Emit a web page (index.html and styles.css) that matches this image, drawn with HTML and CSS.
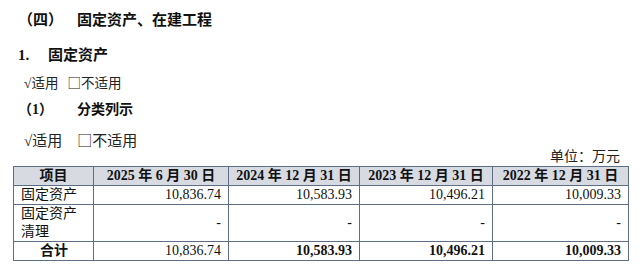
FILE: index.html
```html
<!DOCTYPE html>
<html lang="zh-CN">
<head>
    <meta charset="utf-8">
    <title>固定资产、在建工程</title>
    <link rel="stylesheet" href="styles.css">
</head>
<body>

<div class="title">
    <span class="title-no">（四）</span><span>固定资产、在建工程</span>
</div>

<div class="sub">
    <span class="sub-no">1.</span><span>固定资产</span>
</div>

<div class="check small">√适用<span class="box">□</span>不适用</div>

<div class="minor">
    <span class="minor-no">（1）</span><span>分类列示</span>
</div>

<div class="check big">√适用<span class="box">□</span>不适用</div>

<div class="sheet">
    <div class="unit">单位：万元</div>
    <table class="grid">
        <colgroup>
            <col class="c-item">
            <col class="c-d1">
            <col class="c-d2">
            <col class="c-d3">
            <col class="c-d4">
        </colgroup>
        <tr class="head">
            <th>项目</th>
            <th>2025 年 6 月 30 日</th>
            <th>2024 年 12 月 31 日</th>
            <th>2023 年 12 月 31 日</th>
            <th>2022 年 12 月 31 日</th>
        </tr>
        <tr class="row-one">
            <td class="name">固定资产</td>
            <td class="num">10,836.74</td>
            <td class="num">10,583.93</td>
            <td class="num">10,496.21</td>
            <td class="num">10,009.33</td>
        </tr>
        <tr class="row-two">
            <td class="name">固定资产清理</td>
            <td class="num">-</td>
            <td class="num">-</td>
            <td class="num">-</td>
            <td class="num">-</td>
        </tr>
        <tr class="row-total">
            <td class="name total-name">合计</td>
            <td class="num">10,836.74</td>
            <td class="num strong">10,583.93</td>
            <td class="num strong">10,496.21</td>
            <td class="num strong">10,009.33</td>
        </tr>
    </table>
</div>

</body>
</html>
```

FILE: styles.css
```css
* {
    margin: 0;
    padding: 0;
    box-sizing: border-box;
}

body {
    width: 642px;
    height: 275px;
    overflow: hidden;
    background: #ffffff;
    color: #111111;
    font-family: "Liberation Serif", "Noto Sans CJK SC", serif;
}

.title {
    margin-top: 8px;
    padding-left: 18px;
    font-size: 15px;
    line-height: 24px;
    font-weight: bold;
}

.title-no {
    display: inline-block;
    width: 59px;
}

.sub {
    margin-top: 11px;
    padding-left: 18px;
    font-size: 15px;
    line-height: 24px;
    font-weight: bold;
}

.sub-no {
    display: inline-block;
    width: 30px;
}

.check {
    padding-left: 24px;
    color: #222222;
}

.box {
    font-family: "Noto Sans CJK SC", sans-serif;
    margin-left: 9px;
}

.check.small {
    margin-top: 4px;
    font-size: 13.5px;
    line-height: 22px;
}

.minor {
    margin-top: 4px;
    padding-left: 18px;
    font-size: 14px;
    line-height: 22px;
    font-weight: bold;
}

.minor-no {
    display: inline-block;
    width: 59px;
}

.check.big {
    margin-top: 7px;
    font-size: 15px;
    line-height: 24px;
}

.check.big .box {
    margin-left: 15px;
}

.sheet {
    margin-left: 13px;
    width: 615px;
}

.unit {
    margin-top: -4px;
    padding-right: 8px;
    text-align: right;
    font-size: 14px;
    line-height: 16px;
    color: #222222;
}

.grid {
    margin-top: 1px;
    width: 615px;
    table-layout: fixed;
    border-collapse: collapse;
    font-size: 14px;
}

.c-item { width: 80px; }
.c-d1 { width: 135px; }
.c-d2 { width: 131px; }
.c-d3 { width: 133px; }
.c-d4 { width: 136px; }

.grid th,
.grid td {
    border: 1px solid #5b6e86;
    line-height: 18px;
    vertical-align: middle;
}

.head th {
    height: 18px;
    background: #d7dbe1;
    font-weight: bold;
    text-align: center;
    white-space: nowrap;
}

.row-one td { height: 19px; }
.row-two td { height: 37px; }
.row-total td { height: 19px; }

.name {
    padding: 0 6px 0 7px;
}

.total-name {
    text-align: center;
    font-weight: bold;
}

.num {
    padding-right: 7px;
    text-align: right;
}

.strong {
    font-weight: bold;
}
```
